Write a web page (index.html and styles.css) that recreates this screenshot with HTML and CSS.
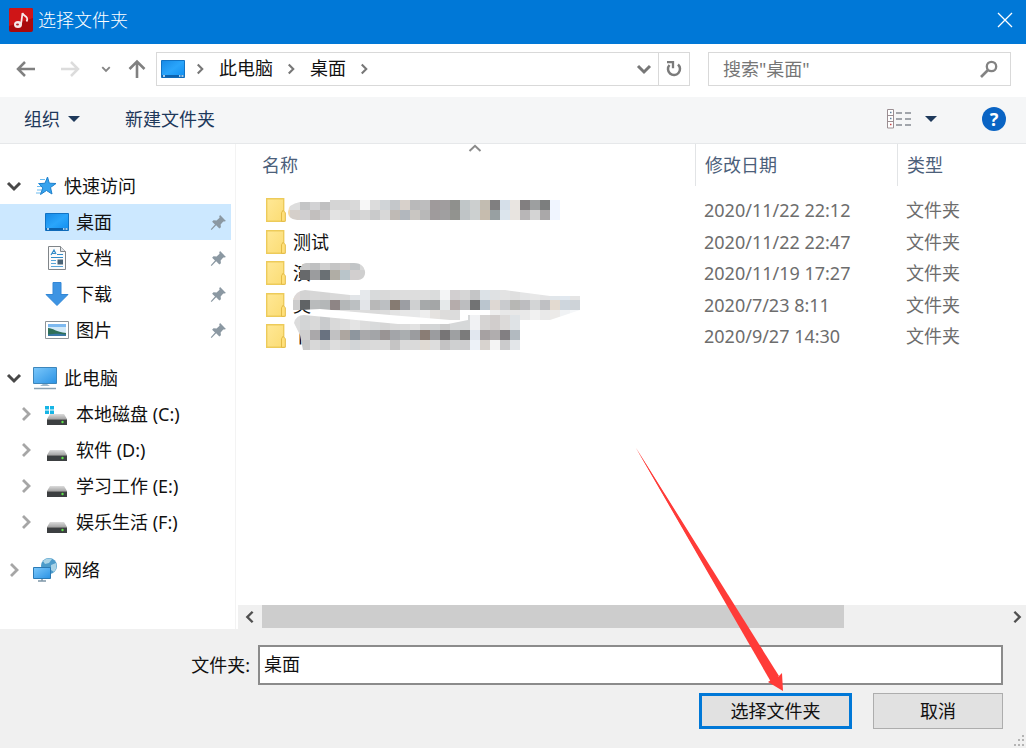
FILE: index.html
```html
<!DOCTYPE html>
<html lang="zh-CN">
<head>
  <meta charset="UTF-8">
  <title>选择文件夹</title>
  <link rel="stylesheet" href="styles.css">
</head>
<body>
  <!-- shared icons -->
  <svg class="sprite" aria-hidden="true">
    <linearGradient id="screen" x1="0" y1="0" x2="1" y2="1">
      <stop offset="0" stop-color="#1689e6"/>
      <stop offset="0.5" stop-color="#2aa5fb"/>
      <stop offset="1" stop-color="#0f8df0"/>
    </linearGradient>
    <linearGradient id="glass" x1="0" y1="0" x2="1" y2="1">
      <stop offset="0" stop-color="#7cc8fb"/>
      <stop offset="1" stop-color="#2a92e4"/>
    </linearGradient>
    <linearGradient id="metal" x1="0" y1="0" x2="0" y2="1">
      <stop offset="0" stop-color="#dcdcdc"/>
      <stop offset="1" stop-color="#a4a4a4"/>
    </linearGradient>
    <linearGradient id="paper" x1="0" y1="0" x2="1" y2="1">
      <stop offset="0" stop-color="#ffe896"/>
      <stop offset="1" stop-color="#fbdc74"/>
    </linearGradient>
    <symbol id="down" viewBox="0 0 16 16">
      <path d="M2 5l6 6 6-6" fill="none" stroke="currentColor" stroke-width="3"/>
    </symbol>
    <symbol id="right" viewBox="0 0 16 16">
      <path d="M5 2l6 6-6 6" fill="none" stroke="currentColor" stroke-width="2.800"/>
    </symbol>
    <symbol id="desktop" viewBox="0 0 24 24">
      <path d="M.5 3.500h23v17H.5z" fill="url(#screen)" stroke="#1273c4"/>
      <path d="M1 18h22v2.500H1z" fill="#0c62ae"/>
      <path d="M2 19h2M18 19h1.500M20.500 19h2" stroke="#d8efff" stroke-width="1.500"/>
    </symbol>
    <symbol id="drive" viewBox="0 0 24 24">
      <path d="M5 12h14l3 5H2z" fill="url(#metal)"/>
      <path d="M2 17h20v6H2z" fill="#3c3f41"/>
      <path d="M2 17.500h20" stroke="#777"/>
      <circle cx="17.500" cy="20" r="1.200" fill="#5fe04a"/>
    </symbol>
    <symbol id="pin" viewBox="0 0 16 16">
      <path d="M9.500 1l5.500 5.500-1.500.5-1 0-2.500 2.800.3 2.700-1.500 1.200-3-3L1.500 15l-.8-.6 4-4.500-2.700-2.600 1.300-1.400 2.900.2L9 3.500 8.700 2z" fill="#8b98a2"/>
    </symbol>
    <symbol id="folder" viewBox="0 0 20 24">
      <path d="M.7.7h17v22.600H.7z" fill="url(#paper)" stroke="#edcb5a" stroke-width="1.400"/>
      <path d="M15.500 23.300v-8.500l1.500-2.500 2.300 2.500v8.500z" fill="#ffe07a" stroke="#e3bb45"/>
    </symbol>
  </svg>

  <div class="dialog">
    <header class="titlebar">
      <svg class="icon" viewBox="0 0 24 24">
        <rect width="24" height="24" rx="2" fill="#a9090c"/>
        <path d="M2 0h20a2 2 0 0 1 2 2v8L0 18V2a2 2 0 0 1 2-2z" fill="#cf1517"/>
        <ellipse cx="9" cy="16.500" rx="4" ry="3.500" fill="#f6e9e9"/>
        <ellipse cx="8.500" cy="16.500" rx="1.500" ry="1" fill="#b52326"/>
        <path d="M12 16.500L13.500 5c.5 2.500 3.500 2.800 4.500 5 .6 1.400.2 2.500-.5 3.500" fill="none" stroke="#f6e9e9" stroke-width="1.800"/>
      </svg>
      <h1 class="title">选择文件夹</h1>
      <button class="close" aria-label="关闭">
        <svg width="16" height="16" viewBox="0 0 16 16"><path d="M1 1l14 14M15 1L1 15" stroke="#fff" stroke-width="1.300"/></svg>
      </button>
    </header>

    <nav class="navbar">
      <button class="nav-btn" aria-label="后退">
        <svg width="20" height="20" viewBox="0 0 20 20"><path d="M19 10H3M9 3l-7 7 7 7" fill="none" stroke="#808080" stroke-width="2.500"/></svg>
      </button>
      <button class="nav-btn" aria-label="前进" disabled>
        <svg width="20" height="20" viewBox="0 0 20 20"><path d="M1 10h16M11 3l7 7-7 7" fill="none" stroke="#dcdcdc" stroke-width="2.500"/></svg>
      </button>
      <button class="nav-btn recent" aria-label="最近浏览的位置">
        <svg width="10" height="10"><use href="#down"/></svg>
      </button>
      <button class="nav-btn" aria-label="上移">
        <svg width="20" height="20" viewBox="0 0 20 20"><path d="M10 19V3M2.500 10L10 2.500l7.500 7.500" fill="none" stroke="#808080" stroke-width="2.600"/></svg>
      </button>
      <div class="address">
        <svg class="icon"><use href="#desktop"/></svg>
        <svg class="sep"><use href="#right"/></svg>
        <a class="crumb" href="#">此电脑</a>
        <svg class="sep"><use href="#right"/></svg>
        <a class="crumb" href="#">桌面</a>
        <svg class="sep"><use href="#right"/></svg>
        <button class="history" aria-label="以前的位置"><svg width="16" height="16"><use href="#down"/></svg></button>
        <button class="refresh" aria-label="刷新">
          <svg width="18" height="18" viewBox="0 0 18 18">
            <path d="M13 4.500a6 6 0 1 1-8.500.5" fill="none" stroke="#7b7b7b" stroke-width="2.500"/>
            <path d="M2 2.200h6v6" fill="none" stroke="#7b7b7b" stroke-width="2.300"/>
          </svg>
        </button>
      </div>
      <div class="search">
        <input class="search-input" type="search" placeholder='搜索"桌面"' aria-label="搜索">
        <button class="search-btn" aria-label="开始搜索">
          <svg width="18" height="18" viewBox="0 0 18 18">
            <circle cx="11.500" cy="6.500" r="4.700" fill="none" stroke="#838383" stroke-width="2.300"/>
            <path d="M8 10l-7 7" stroke="#838383" stroke-width="2.600"/>
          </svg>
        </button>
      </div>
    </nav>

    <div class="toolbar">
      <button class="tool">组织 <span class="caret"></span></button>
      <button class="tool">新建文件夹</button>
      <button class="tool view" aria-label="更改视图">
        <svg width="25" height="20" viewBox="0 0 25 20">
          <path d="M.5.5h6v18.500h-6zM.5 6.500h6M.5 12.500h6" fill="#fff" stroke="#9b8e92"/>
          <path d="M3 3.500h1.500M3 9.500h1.500" stroke="#5d7f9c" stroke-width="1.500"/>
          <path d="M3 15.500h1.500" stroke="#c2474b" stroke-width="1.500"/>
          <path d="M9 4h6M18 4h6M9 10h6M18 10h6M9 16h6M18 16h6" stroke="#858b92" stroke-width="1.500"/>
        </svg>
        <span class="caret"></span>
      </button>
      <button class="help" aria-label="帮助">?</button>
    </div>

    <main class="main">
      <aside class="sidebar">
        <ul class="tree">
          <li>
            <a class="node" href="#">
              <svg class="arrow open"><use href="#down"/></svg>
              <svg class="icon" viewBox="0 0 24 24">
                <path d="M7 5.500h5M5 9.500h5M4 12.500h6M4 16h6M3 19h5" stroke="#6dbcf0" stroke-width="1.200"/>
                <path d="M14.500 3l1.800 6.200 6.700.3-5.500 4 1.500 6.500-5.500-3.500L7.500 20.500l2.300-6.500L6 9.700l6-.5z" fill="#36a3ee" stroke="#1e80cc"/>
              </svg>
              快速访问
            </a>
            <ul class="branch">
              <li><a class="node selected" href="#"><svg class="icon"><use href="#desktop"/></svg>桌面<svg class="pin"><use href="#pin"/></svg></a></li>
              <li><a class="node" href="#">
                <svg class="icon" viewBox="0 0 24 24">
                  <path d="M3.500.5h12l5 5v18h-17z" fill="#fbfbfb" stroke="#808589"/>
                  <path d="M15.500.5v5h5" fill="#e1e4e7" stroke="#808589"/>
                  <path d="M6 9l3-5 2 4M7 7.500h3M12 8.500h6M6 11.500h12" fill="none" stroke="#2f8bc9" stroke-width="1.200"/>
                  <path d="M6 14.500h5M6 17.500h5M6 20.500h12" stroke="#5ba6d8" stroke-width="1.200"/>
                  <path d="M12.500 13.500h5.500v5h-5.500z" fill="#4a6375"/>
                </svg>文档<svg class="pin"><use href="#pin"/></svg></a></li>
              <li><a class="node" href="#">
                <svg class="icon" viewBox="0 0 24 24"><path d="M8 .5h8v12h7L12 23.500 1 12.500h7z" fill="#3d94e3" stroke="#3387d6"/></svg>下载<svg class="pin"><use href="#pin"/></svg></a></li>
              <li><a class="node" href="#">
                <svg class="icon" viewBox="0 0 24 24">
                  <path d="M.5 3.500h23v17H.5z" fill="#fff" stroke="#8d9398"/>
                  <path d="M3 6h18v12H3z" fill="#7db9f0"/>
                  <path d="M3 9h18v6H3z" fill="#d2e9f8"/>
                  <path d="M3 10c5 0 8 4 18 5v3H3z" fill="#2f6f58"/>
                  <path d="M3 16.500c7-1 11-1 18 0V18H3z" fill="#3a78a8"/>
                </svg>图片<svg class="pin"><use href="#pin"/></svg></a></li>
            </ul>
          </li>
          <li>
            <a class="node" href="#">
              <svg class="arrow open"><use href="#down"/></svg>
              <svg class="icon" viewBox="0 0 24 24">
                <path d="M.5 1.500h23v16H.5z" fill="url(#glass)" stroke="#3d86bb"/>
                <path d="M10 18h4l3 2H7z" fill="#9fb8ca"/>
                <path d="M1 22.500h22" stroke="#8aa1b2" stroke-width="1.500"/>
              </svg>
              此电脑
            </a>
            <ul class="branch">
              <li><a class="node" href="#"><svg class="arrow"><use href="#right"/></svg>
                <svg class="icon" viewBox="0 0 24 24">
                  <use href="#drive" width="24" height="24"/>
                  <path d="M0 4h4v3.500H0zM5 4h4v3.500H5zM0 8.500h4V12H0zM5 8.500h4V12H5z" fill="#17b5e5"/>
                </svg>本地磁盘 (C:)</a></li>
              <li><a class="node" href="#"><svg class="arrow"><use href="#right"/></svg><svg class="icon"><use href="#drive"/></svg>软件 (D:)</a></li>
              <li><a class="node" href="#"><svg class="arrow"><use href="#right"/></svg><svg class="icon"><use href="#drive"/></svg>学习工作 (E:)</a></li>
              <li><a class="node" href="#"><svg class="arrow"><use href="#right"/></svg><svg class="icon"><use href="#drive"/></svg>娱乐生活 (F:)</a></li>
            </ul>
          </li>
          <li>
            <a class="node" href="#">
              <svg class="arrow"><use href="#right"/></svg>
              <svg class="icon" viewBox="0 0 24 24">
                <circle cx="16" cy="8" r="8" fill="#4c9bca"/>
                <path d="M10 3c3-3 7-3 9-2l-3 4-4 1zM18 7l5-2c1 4 0 7-2 9l-3-2z" fill="#a9d3e6"/>
                <path d="M.5 9.500h17v11H.5z" fill="url(#glass)" stroke="#2a7ab5"/>
                <path d="M5 23h8M9 21v2" stroke="#7f97a8" stroke-width="1.500"/>
              </svg>
              网络
            </a>
          </li>
        </ul>
      </aside>

      <section class="list">
        <svg class="sort" aria-hidden="true" viewBox="0 0 14 8"><path d="M1.500 7L7 1.800 12.500 7" fill="none" stroke="#8a8a8a" stroke-width="2"/></svg>
        <table class="files">
          <thead>
            <tr><th class="name">名称</th><th class="date"><span>修改日期</span></th><th class="type"><span>类型</span></th></tr>
          </thead>
          <tbody>
            <tr><td><div class="file"><svg class="folder"><use href="#folder"/></svg></div></td><td>2020/11/22 22:12</td><td>文件夹</td></tr>
            <tr><td><div class="file"><svg class="folder"><use href="#folder"/></svg>测试</div></td><td>2020/11/22 22:47</td><td>文件夹</td></tr>
            <tr><td><div class="file"><svg class="folder"><use href="#folder"/></svg>演</div></td><td>2020/11/19 17:27</td><td>文件夹</td></tr>
            <tr><td><div class="file"><svg class="folder"><use href="#folder"/></svg>英</div></td><td>2020/7/23 8:11</td><td>文件夹</td></tr>
            <tr><td><div class="file"><svg class="folder"><use href="#folder"/></svg>卜</div></td><td>2020/9/27 14:30</td><td>文件夹</td></tr>
          </tbody>
        </table>

        <!-- blocks that hide the private folder names -->
        <svg class="mosaic" viewBox="0 0 300 160" aria-hidden="true">
          <clipPath id="clip0"><path d="M12 7h30V5h230v20H12Q0 25 0 17T12 7z"/></clipPath>
          <clipPath id="clip1"><path d="M18 68h48c14 0 14 17 4 17H12V74q2-6 6-6z"/></clipPath>
          <clipPath id="clip2"><path d="M5 105q2-9 12-10l45 5h10V95h145l45 6h30v14l-30 10H162l-60-5-70-6-20 1h-7z"/></clipPath>
          <clipPath id="clip3"><path d="M6 128q2-8 10-8l94 9h50l20-4V120h52v35H15l-3-15z"/></clipPath>
        </svg>

        <div class="scrollbar">
          <button class="scroll-btn" aria-label="向左滚动"><svg class="flip" width="14" height="14"><use href="#right"/></svg></button>
          <div class="track"><div class="thumb"></div></div>
          <button class="scroll-btn" aria-label="向右滚动"><svg width="14" height="14"><use href="#right"/></svg></button>
        </div>
      </section>
    </main>

    <footer class="footer">
      <div class="field">
        <label class="field-label" for="folderName">文件夹:</label>
        <input class="field-input" id="folderName" type="text" value="桌面">
      </div>
      <div class="actions">
        <button class="btn primary">选择文件夹</button>
        <button class="btn">取消</button>
      </div>
      <svg class="grip" width="12" height="12" viewBox="0 0 12 12" aria-hidden="true">
        <path d="M9 0h2v2H9zM5 4h2v2H5zM9 4h2v2H9zM1 9h2v2H1zM5 9h2v2H5zM9 9h2v2H9z" fill="#b4b4b4"/>
      </svg>
    </footer>

    <svg class="pointer" width="148" height="244" viewBox="0 0 148 244" aria-hidden="true">
      <path d="M0 0l142 229 4-4 1 18-15-9 3-2L0 0z" fill="#ff3b38"/>
      <path d="M0 0L143 228l-8 6z" fill="#ff3b38"/>
    </svg>
  </div>

  <script>
    // clip index, x and y of the first block, then one colour per 10px block
    var rows = [
      [0, -8, 5, "f3dfc0 ddd c4c5c6 d2d2d4 c0c0c1 d5d5d5 d5d5d5 d9d9d9 f7f7f7 dcdcdc d0d4d7 c4c7ca d8d1cb b9b9ba bdbdbe 9f9a9b a09d9e 8f908d c0c6c8 cccfcf c2bcb1 807f80 d5dfe9 e9e5e1 827f80 9d9fa0 7c7e7e f0f5ff"],
      [0, -8, 15, "f3d9a8 d5cfca d0cfd0 c2bfbe cbc9ca e3e3e3 e0e0e0 d2d2d2 d6d6d6 c9cacb d8d8d8 bfbab5 b2b7bd c9c6c2 b8b8b8 9f9b9c a09fa0 92938f bfc4c6 ccd0d0 c6bcae 98a0a2 dce5ed e8e4e0 b8b6b7 d4d4d4 aaa8a9 f0f5ff"],
      [1, 2, 65, "d8d8d8 c9c9c9 bfc0c1 d0d0d0 c5c5c5 ccc9c8 c2c5c7 d7d7d7"],
      [1, 2, 75, "dadada 67696b 9b9c9e 6a7074 b0ada5 bac5ca d2cfcf cfcfcf"],
      [2, 2, 95, "ddd8d7 d3d3d3 d7d7d7 d4d4d4 d9d9d9 dadada e2e5e8 e6e9ec d8dadb d9d9d9 dcdcdc dddddd dddddd dedede dadcdc f4f5f6 d2cfd0 d6d6d6 c4c5c6 dce2e7 dfe1e3 e3e3e3 dfdfdf e4e5e6 e8e8e8 e4e4e5 e1e6ea e1e8ef e5e5e5"],
      [2, 2, 105, "ccc 606365 b9bbbc b4b7b8 8e8585 b4b7b8 bcc0c2 e3e5e9 b8b8b8 bcbfc2 867b72 9c9ea3 cfd0d1 a6a9aa a4a6a7 e5e9ea b5acab bcbdbf 727374 bac5ce ded8d3 c9cbce b7b7b4 bdbdc0 d3d5d6 bfc0c3 e3dad0 ced6dd ced3d8"],
      [2, 2, 115, "fff fff fff e5e5e5 e3e3e3 e1e1e1 dddddd dcdcdc dadada dcdcdc e3e3e3 e7e7e7 e7e8e9 eeeeee e5e2df dddcdb dcdcdc fff fff fff eeeeee e8e8e8 e8e8e8 e9e9e9 f1f1f1 e9e9e9 eceae8 f0f2f4 f5f7f9"],
      [3, 2, 120, "dcdcdc d3d5d6 d9d9d9 c9cbcd d9d9d9 dddddd e4e4e4 dddddd d8dadb d6d6d6 dbdbdb dddddd e2e2e2 d4d4d4 d3d5d6 cdcdcd d6d8d9 d6d8d9 f1f2f4 d6d4d3 d1cdcc dcdad9 dfe3e6"],
      [3, 2, 135, "dadada cfcfcf aaa8aa 697280 c1c1c2 ada6a0 8e969e a9a9ab a3a5a8 999494 a3a5a9 aaaeb0 9b9c9f 8a7d75 9b9c9f 777576 9ea0a2 7b7b7b e1e7ef a6a1a2 b0adae 827f82 b2bac0"],
      [3, 2, 145, "d9d9d9 c8c8c8 d8d8d8 cfd0d1 dddddd d8d8d8 d2d5d7 d8d8d8 dadada dadada c5c4c4 dadada dadada e0dad3 dddddd c4c3c4 cfd0d1 cdcdcf edf2f8 d8d3cf f4f4f4 cbcbcc e3e6e9"]
    ];
    var ns = "http://www.w3.org/2000/svg";
    var mosaic = document.querySelector(".mosaic");
    rows.forEach(function (row) {
      var group = document.createElementNS(ns, "g");
      group.setAttribute("clip-path", "url(#clip" + row[0] + ")");
      row[3].split(" ").forEach(function (color, i) {
        var rect = document.createElementNS(ns, "rect");
        rect.setAttribute("x", row[1] + i * 10);
        rect.setAttribute("y", row[2]);
        rect.setAttribute("width", 10);
        rect.setAttribute("height", row[2] === 120 ? 15 : 10);
        rect.setAttribute("fill", "#" + color);
        group.appendChild(rect);
      });
      mosaic.appendChild(group);
    });
  </script>
</body>
</html>
```
FILE: styles.css
```css
* {
  box-sizing: border-box;
}

body {
  margin: 0;
  font-family: "Noto Sans", "Noto Sans CJK SC", sans-serif;
  font-size: 18px;
  line-height: 24px;
  color: #111;
}

button,
input {
  font: inherit;
  color: inherit;
}

button {
  padding: 0;
  border: none;
  background: none;
}

a {
  color: inherit;
  text-decoration: none;
}

ul {
  margin: 0;
  padding: 0;
  list-style: none;
}

svg {
  display: block;
  flex-shrink: 0;
}

.sprite {
  position: absolute;
  width: 0;
  height: 0;
}

.dialog {
  position: relative;
  display: flex;
  flex-direction: column;
  min-height: 100vh;
  background: #fff;
}

.icon {
  width: 24px;
  height: 24px;
}

/* title bar */
.titlebar {
  display: flex;
  align-items: center;
  gap: 5px;
  height: 44px;
  padding: 0 13px 4px 9px;
  background: #0078d7;
  color: #fff;
}

.title {
  margin: 0;
  font-size: 18px;
  font-weight: 300;
}

.close {
  margin-left: auto;
}

/* navigation */
.navbar {
  display: flex;
  align-items: center;
  height: 53px;
  padding: 0 15px 4px 16px;
}

.nav-btn {
  display: flex;
  margin-right: 24px;
}

.nav-btn:disabled {
  margin-right: 21px;
}

.recent {
  margin-right: 16px;
  color: #858585;
}

.recent + .nav-btn {
  margin-right: 9px;
}

.address,
.search {
  display: flex;
  align-items: center;
  height: 34px;
  border: 1px solid #d9d9d9;
}

.address {
  flex: 528;
  margin-right: 18px;
  padding-left: 4px;
}

.address .crumb {
  padding-bottom: 2px;
}

.sep {
  width: 12px;
  height: 12px;
  margin: 0 13px 0 9px;
  color: #777;
}

.crumb + .sep {
  margin-left: 12px;
}

.history {
  margin-left: auto;
  padding: 0 6px;
  color: #777;
}

.refresh {
  display: flex;
  align-items: center;
  height: 100%;
  padding: 0 6px;
  border-left: 1px solid #d9d9d9;
}

.search {
  flex: 275;
  padding: 0 12px 0 14px;
}

.search-input {
  flex: 1;
  min-width: 0;
  padding: 0;
  border: none;
  outline: none;
}

.search-input::placeholder {
  color: #767676;
}

/* toolbar */
.toolbar {
  display: flex;
  align-items: center;
  gap: 45px;
  height: 47px;
  padding: 0 20px 2px 24px;
  background: #f5f6f7;
  border-bottom: 1px solid #e6e8ea;
  color: #1e395b;
}

.tool {
  display: flex;
  align-items: center;
  gap: 8px;
}

.view {
  gap: 13px;
  margin-left: auto;
}

.caret {
  border: 6px solid transparent;
  border-top-color: #1e395b;
  border-bottom: none;
}

.help {
  width: 24px;
  height: 24px;
  border-radius: 50%;
  background: #0a64c4;
  color: #fff;
  font-weight: 700;
}

/* folder tree */
.main {
  display: flex;
  flex: 1;
}

.sidebar {
  width: 236px;
  padding: 24px 4px 0 0;
  border-right: 1px solid #f3f3f3;
}

.tree > li {
  margin-bottom: 12px;
}

.node {
  display: flex;
  align-items: center;
  height: 36px;
  padding: 0 4px 0 6px;
  white-space: nowrap;
}

.branch .node {
  padding-left: 18px;
}

.node .icon {
  margin: 0 7px 0 11px;
}

.branch .node > .icon:first-child {
  margin-left: 27px;
}

.selected {
  background: #cce8ff;
}

.arrow {
  width: 16px;
  height: 16px;
  color: #a6a6a6;
}

.open {
  color: #484848;
}

.pin {
  width: 17px;
  height: 17px;
  margin-left: auto;
}

/* file list */
.list {
  position: relative;
  display: flex;
  flex: 1;
  flex-direction: column;
  min-width: 0;
}

.sort {
  position: absolute;
  top: 0;
  left: 232px;
  width: 14px;
  height: 8px;
}

.files {
  width: 100%;
  table-layout: fixed;
  border-collapse: collapse;
}

.files th {
  height: 50px;
  padding: 0;
  color: #4c607a;
  font-weight: 400;
  text-align: left;
  vertical-align: top;
}

.files th span {
  display: block;
  border-left: 1px solid #e2e4e6;
}

.files th span,
.files .name {
  line-height: 42px;
}

.files .name {
  padding-left: 26px;
}

.files th span,
.files td {
  padding: 0 0 0 9px;
}

.date {
  width: 202px;
}

.type {
  width: 129px;
}

.files td {
  height: 31px;
  color: #6d6d6d;
}

.files tr:nth-child(odd) td {
  height: 32px;
}

.files td:first-child {
  padding-left: 30px;
  color: #111;
}

.file {
  display: flex;
  align-items: center;
  gap: 7px;
}

.folder {
  width: 20px;
  height: 24px;
}

.mosaic {
  position: absolute;
  top: 51px;
  left: 52px;
  width: 300px;
  height: 160px;
}

.scrollbar {
  display: flex;
  height: 24px;
  margin: auto 0 0 2px;
  background: #f0f0f0;
  color: #505050;
}

.scroll-btn {
  display: flex;
  align-items: center;
  justify-content: center;
  width: 24px;
}

.scroll-btn:last-child {
  width: 18px;
}

.flip {
  transform: scaleX(-1);
}

.track {
  flex: 1;
}

.thumb {
  width: 78%;
  height: 23px;
  background: #cdcdcd;
}

/* footer */
.footer {
  position: relative;
  padding: 16px 23px 19px;
  background: #f0f0f0;
}

.field {
  display: flex;
  align-items: center;
}

.field-label {
  width: 227px;
  text-align: right;
}

.field-input {
  flex: 1;
  height: 40px;
  margin-left: 8px;
  padding: 0 4px 4px;
  border: 2px solid #8b8b8b;
  border-radius: 0;
  background: #fff;
}

.actions {
  display: flex;
  justify-content: flex-end;
  gap: 21px;
  margin-top: 8px;
}

.btn {
  width: 130px;
  height: 36px;
  border: 1px solid #adadad;
  background: #e1e1e1;
}

.primary {
  width: 153px;
  border: 3px solid #0078d7;
}

.grip {
  position: absolute;
  right: 1px;
  bottom: 1px;
}

.pointer {
  position: absolute;
  right: 242px;
  bottom: 56px;
}
```
